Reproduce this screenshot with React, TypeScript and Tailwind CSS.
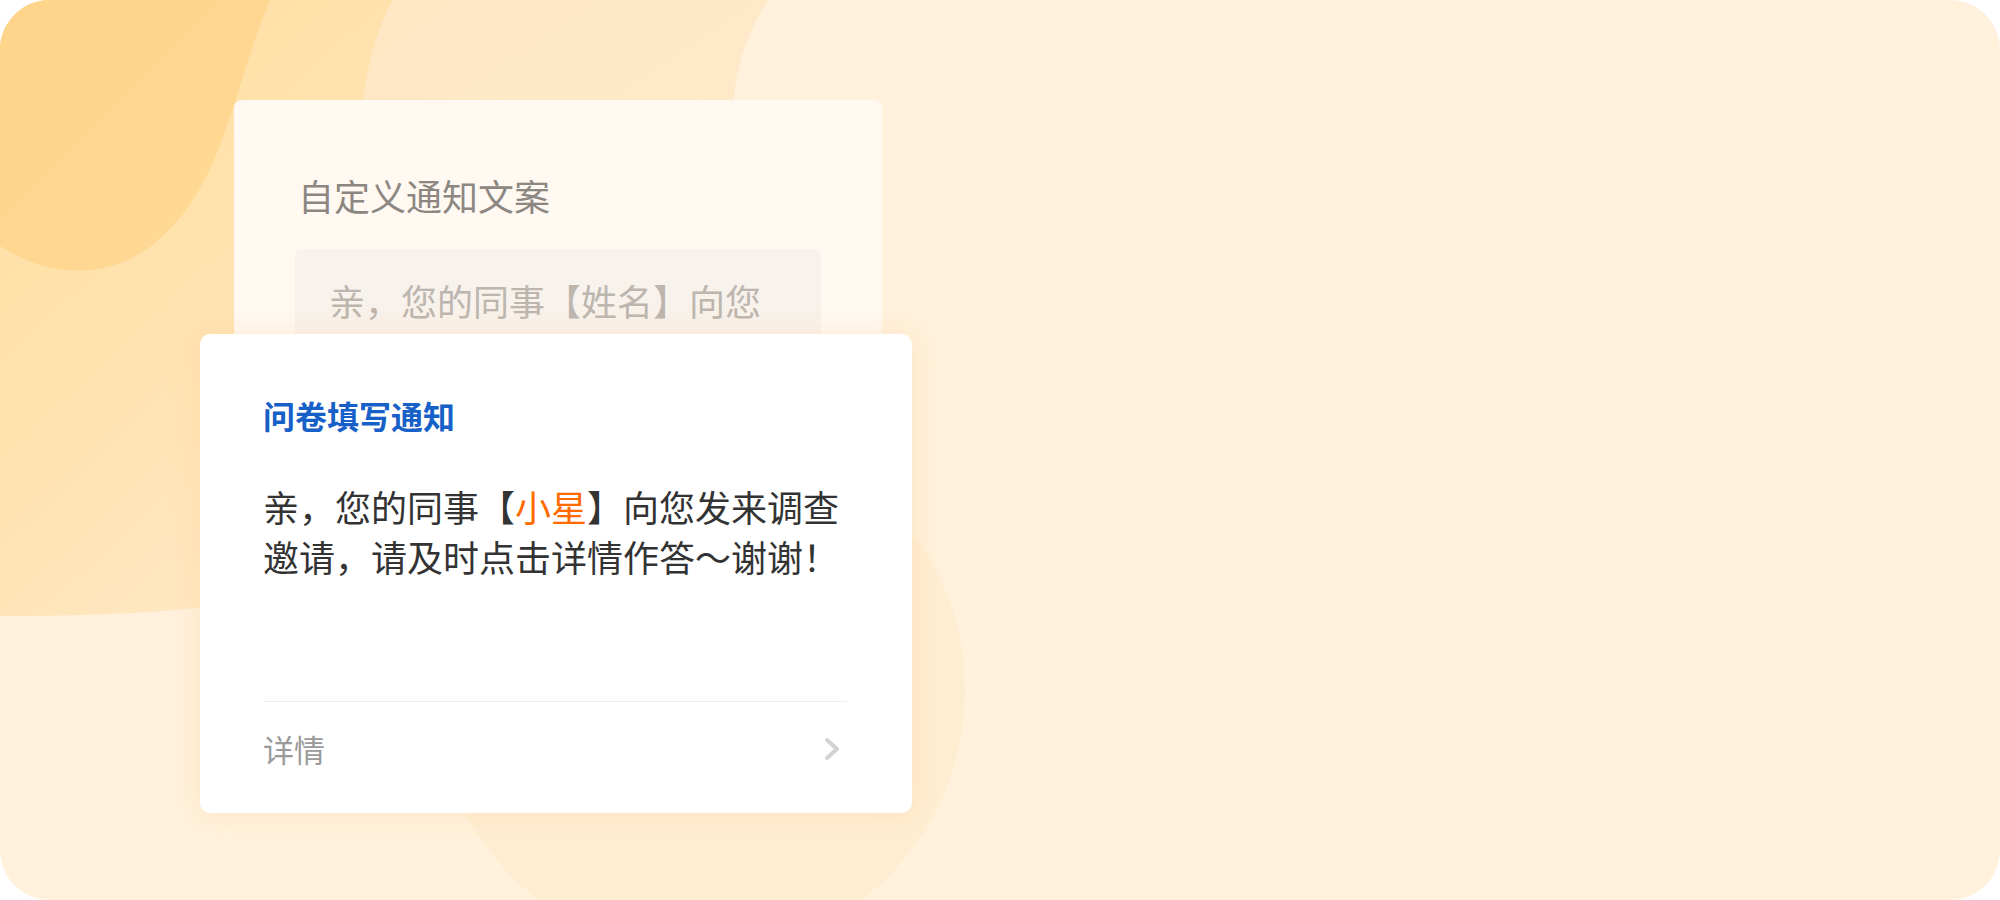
import React from "react";

const FONT = { fontFamily: '"Noto Sans CJK SC", "Noto Sans", sans-serif' };

function Backdrop() {
  return (
    <svg
      className="absolute inset-0"
      width="2000"
      height="900"
      viewBox="0 0 2000 900"
      fill="none"
    >
      <defs>
        <linearGradient id="peach" x1="0" y1="0" x2="1" y2="1">
          <stop offset="0" stopColor="#ffe6c0" />
          <stop offset="1" stopColor="#ffebcf" />
        </linearGradient>
        <linearGradient id="yellow" x1="0" y1="0" x2="0.6" y2="1">
          <stop offset="0" stopColor="#ffe0a2" />
          <stop offset="0.55" stopColor="#ffe2ae" />
          <stop offset="1" stopColor="#ffe8c4" />
        </linearGradient>
        <linearGradient id="orange" x1="0" y1="0" x2="1" y2="1">
          <stop offset="0" stopColor="#ffd48a" />
          <stop offset="1" stopColor="#ffd996" />
        </linearGradient>
      </defs>

      {/* light peach sheet on the left half */}
      <path
        d="M0 0 H768 C746 34 734 72 733 112 L733 520 L0 520 Z"
        fill="url(#peach)"
      />
      {/* big round shape behind the front card */}
      <circle cx="700" cy="690" r="265" fill="#ffedd2" />
      {/* yellow sheet */}
      <path
        d="M0 0 H392 C374 36 364 76 362 120 L362 560 C300 600 200 616 0 616 Z"
        fill="url(#yellow)"
      />
      {/* orange blob top left */}
      <path
        d="M0 0 H270 C254 36 240 90 222 140 C200 200 160 262 92 270 C52 274 22 260 0 246 Z"
        fill="url(#orange)"
      />
    </svg>
  );
}

function Chevron() {
  return (
    <svg width="17" height="24" viewBox="0 0 17 24" fill="none">
      <polyline
        points="3,3 13,12 3,21"
        stroke="#d2d2d2"
        strokeWidth="4"
        strokeLinecap="round"
        strokeLinejoin="round"
      />
    </svg>
  );
}

export default function App() {
  return (
    <div className="w-[2000px] h-[900px] bg-white" style={FONT}>
      <div className="relative w-full h-full overflow-hidden rounded-[50px] bg-[#fff1dc]">
        <Backdrop />

        <div className="relative pt-[100px] pl-[200px]">
          {/* template card (behind) */}
          <div className="ml-[34px] h-[420px] w-[648px] rounded-[8px] bg-[#fff9f2] px-[61px] pt-[70px]">
            <div className="pl-[3px] text-[36px] leading-[50px] text-[#8d8782]">
              自定义通知文案
            </div>
            <div className="mt-[29px] h-[300px] rounded-[6px] bg-[#f8f2ec] px-[34px] pt-[25px] text-[36px] leading-[52px] text-[#bdb6af]">
              亲，您的同事【姓名】向您发来调查邀请，请及时点击详情作答～谢谢！
            </div>
          </div>

          {/* notification card */}
          <div className="relative -mt-[186px] w-[712px] rounded-[10px] bg-white px-[63px] pt-[57px] pb-[17px] shadow-[0_0_28px_rgba(255,196,130,0.28)]">
            <div className="text-[32px] font-semibold leading-[48px] text-[#1660c8]">
              问卷填写通知
            </div>
            <div className="mt-[42px] w-[590px] text-[36px] leading-[50px] text-[#333333]">
              亲，您的同事【<span className="text-[#ff6b00]">小星</span>】向您发来调查邀请，请及时点击详情作答～谢谢！
            </div>
            <div className="mt-[120px] h-px w-[584px] bg-[#eeeeee]" />
            <div className="flex h-[94px] w-[584px] items-center justify-between">
              <span className="text-[31px] leading-[40px] text-[#9a9a9a]">详情</span>
              <span className="mr-[6px] flex items-center">
                <Chevron />
              </span>
            </div>
          </div>
        </div>
      </div>
    </div>
  );
}
